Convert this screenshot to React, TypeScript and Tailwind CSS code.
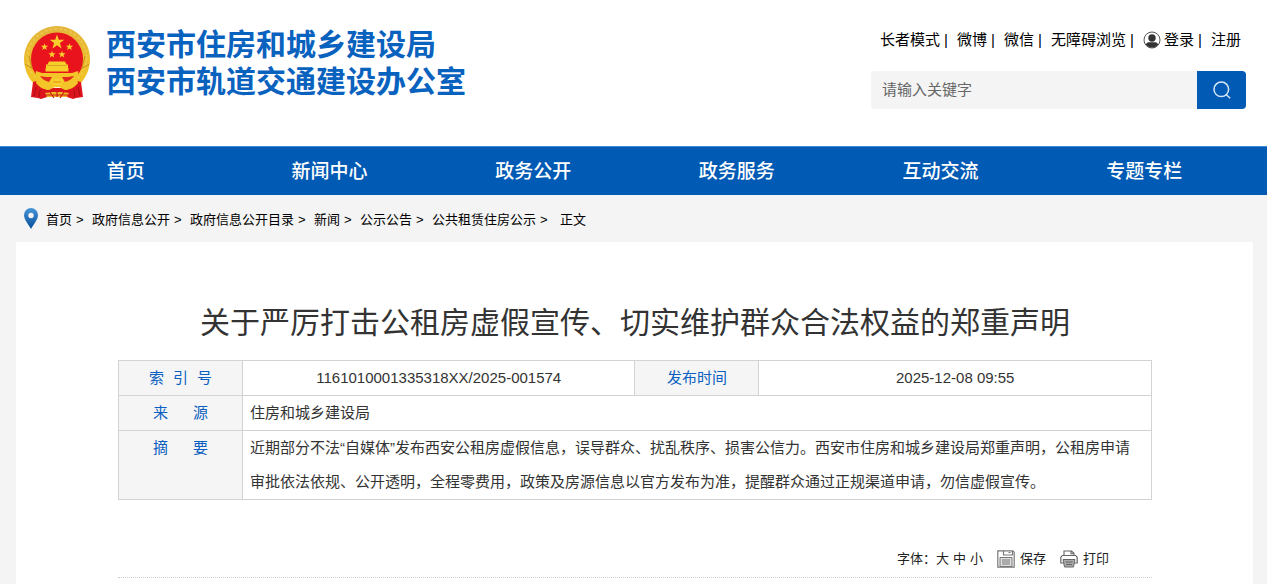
import React from "react";

const topLinks = ["长者模式", "微博", "微信", "无障碍浏览"];

const navItems = ["首页", "新闻中心", "政务公开", "政务服务", "互动交流", "专题专栏"];

const crumbs = ["首页", "政府信息公开", "政府信息公开目录", "新闻", "公示公告", "公共租赁住房公示"];

function Emblem() {
  return (
    <svg viewBox="0 0 66 73" className="h-[73px] w-[66px] shrink-0" role="img" aria-label="国徽">
      <defs>
        <linearGradient id="gold" x1="0" y1="0" x2="0" y2="1">
          <stop offset="0" stopColor="#e3b53c" />
          <stop offset="1" stopColor="#f3c321" />
        </linearGradient>
      </defs>
      {/* wheat ring */}
      <path d="M33 0C15 0 0 15 0 33c0 10 4 19 11 26h44c7-7 11-16 11-26C66 15 51 0 33 0z" fill="url(#gold)" />
      <ellipse
        cx="33"
        cy="32"
        rx="29.5"
        ry="29"
        fill="none"
        stroke="#f8dc6a"
        strokeWidth="2"
        strokeDasharray="3 2"
        opacity="0.4"
      />
      <path d="M1 38l8 5M65 38l-8 5M5 30l3 12M61 30l-3 12" fill="none" stroke="#b98418" strokeWidth="0.8" />
      <ellipse cx="33" cy="33" rx="26" ry="26.5" fill="#e8131c" />
      {/* stars */}
      <g fill="#f9cf2d">
        <path d="M33 8.5l1.800 5.200 5.500.1-4.400 3.300 1.600 5.300-4.500-3.100-4.500 3.100 1.600-5.300-4.400-3.300 5.500-.1z" />
        <path id="s" d="M20.500 17.200l.9 2.500 2.700.1-2.100 1.600.8 2.600-2.300-1.600-2.300 1.600.8-2.600-2.100-1.600 2.700-.1z" />
        <use href="#s" x="25" />
        <use href="#s" x="7.500" y="7.500" />
        <use href="#s" x="17.500" y="7.500" />
      </g>
      {/* gate tower */}
      <path d="M25 35.500h16l1.500 3H44v4H22v-4h1.500zM21.500 42h23v3.500h-23z" fill="#f7cf2b" />
      <path d="M23 39.500h20" stroke="#d59d1b" strokeWidth="0.8" />
      {/* gear and wheat stems */}
      <path
        d="M12 45l6 2h30l6-2 1 5c-4 6-9 9-15 11H26c-6-2-11-5-15-11z"
        fill="#f4c528"
      />
      <path d="M16 50c4 1 8 1 12 1l-3 5c-4-1-7-3-9-6zM50 50c-4 1-8 1-12 1l3 5c4-1 7-3 9-6z" fill="#e32a1c" />
      {/* ribbon */}
      <path d="M9 56l4-1 5 4 8 3h14l8-3 5-4 4 1 2 15-7 1-3 1-6-2H23l-6 2-3-1-7-1z" fill="#dc141c" />
      <path d="M13 53c4 4 8 6 12 6l8-3 8 3c4 0 8-2 12-6l1 4c-4 5-9 7-13 7l-8-4-8 4c-4 0-9-2-13-7z" fill="#f4c528" />
      <path d="M27 56l2-3h8l2 3-2 3h-8z" fill="#f8cf2e" />
      <path d="M29 56h8" stroke="#e08a19" strokeWidth="1" />
      <path d="M21 67l7-1h10l7 1-2 4H23z" fill="#ecb925" />
      <path d="M26 66l4 6M40 66l-4 6M33 65v6M21 69h24" stroke="#cf1b16" strokeWidth="1.200" />
      <path d="M12 61l-2 9M16 64l-1 7M54 61l2 9M50 64l1 7" stroke="#a80f16" strokeWidth="1" />
    </svg>
  );
}

function UserIcon() {
  return (
    <svg viewBox="0 0 18 18" className="h-[18px] w-[18px]" aria-hidden>
      <circle cx="9" cy="9" r="8" fill="#fff" stroke="#555" strokeWidth="1" />
      <circle cx="9" cy="7" r="3.700" fill="#333" />
      <path d="M2.800 13.500c.6-1.700 2-2.300 3.500-2.300h5.400c1.500 0 2.900.6 3.500 2.300C13.700 15.600 11.500 16.600 9 16.600s-4.700-1-6.200-3.100z" fill="#333" />
    </svg>
  );
}

function PinIcon() {
  return (
    <svg viewBox="0 0 14 21" className="h-[21px] w-[14px] shrink-0" aria-hidden>
      <defs>
        <linearGradient id="pin" x1="0" y1="0" x2="0" y2="1">
          <stop offset="0" stopColor="#4796d6" />
          <stop offset="1" stopColor="#054c9c" />
        </linearGradient>
      </defs>
      <path
        fillRule="evenodd"
        d="M7 0a7 7 0 0 0-7 7c0 5 4.500 9 7 14 2.500-5 7-9 7-14a7 7 0 0 0-7-7zm0 4.800a2.700 2.700 0 1 1 0 5.400 2.700 2.700 0 0 1 0-5.400z"
        fill="url(#pin)"
      />
    </svg>
  );
}

function SaveIcon() {
  return (
    <svg viewBox="0 0 18 18" className="h-[18px] w-[18px]" fill="none" stroke="#777" aria-hidden>
      <path d="M.8.8h15l1.400 1.400v15H.8z" strokeWidth="1.200" />
      <path d="M6.500 1v4h9V1M11.500 2.500h2" strokeWidth="1.200" />
      <path d="M3 7.500h12v9H3z" fill="#ddd" strokeWidth="1" />
      <path d="M5 10h8M5 12h8M5 14h8" strokeWidth="1" />
    </svg>
  );
}

function PrintIcon() {
  return (
    <svg viewBox="0 0 18 18" className="h-[18px] w-[18px]" fill="none" stroke="#666" aria-hidden>
      <path d="M4 5.500V1h7.500L14 3.300v2.200M11 1v2.800h3" strokeWidth="1.100" />
      <path d="M3.500 13H.8V7.500l1.500-2h13.400l1.500 2V13h-2.700" strokeWidth="1.200" />
      <path d="M3 9.500h12l-1.500 7.500h-9z" fill="#aaa" strokeWidth="1" />
      <path d="M5.500 12h7M6 14.500h6" strokeWidth="1.200" />
    </svg>
  );
}

function Header() {
  return (
    <header className="flex h-[146px] items-start justify-between bg-white pl-6 pr-[21px]">
      <a href="#" className="flex gap-4 pt-[26px]">
        <Emblem />
        <h1 className="text-[30px] font-bold leading-[37px] text-[#0a62bf]">
          西安市住房和城乡建设局
          <br />
          西安市轨道交通建设办公室
        </h1>
      </a>

      <div className="w-[375px] pt-[30px]">
        <div className="flex items-center justify-end pr-[5px] text-[15px] leading-5 text-black">
          {topLinks.map((label) => (
            <React.Fragment key={label}>
              <a href="#">{label}</a>
              <span className="w-[17px] pl-1">|</span>
            </React.Fragment>
          ))}
          <a href="#" className="flex items-center gap-[3px]">
            <UserIcon />
            登录
          </a>
          <span className="w-[17px] pl-1">|</span>
          <a href="#">注册</a>
        </div>

        <form className="mt-[21px] flex h-[38px] overflow-hidden rounded-[4px]" onSubmit={(e) => e.preventDefault()}>
          <input
            type="text"
            aria-label="搜索"
            placeholder="请输入关键字"
            className="min-w-0 flex-1 bg-[#f4f4f4] px-[11px] text-[15px] outline-none placeholder:text-[#666]"
          />
          <button type="submit" aria-label="搜索" className="flex w-[49px] items-center justify-center bg-[#015ab4]">
            <svg viewBox="0 0 18 18" className="h-[18px] w-[18px]" fill="none" stroke="#d5e6f6" strokeWidth="1.500" aria-hidden>
              <circle cx="8.300" cy="8.300" r="7.300" />
              <path d="M12.800 13.200l4.400 4" />
            </svg>
          </button>
        </form>
      </div>
    </header>
  );
}

function Nav() {
  return (
    <nav className="h-[49px] border-t border-[#3d8ad2] bg-[#015ab4] pl-6 pr-[21px]">
      <ul className="grid h-full grid-cols-6 items-center pt-0.5 text-center text-[19px] font-medium text-white">
        {navItems.map((label) => (
          <li key={label}>
            <a href="#">{label}</a>
          </li>
        ))}
      </ul>
    </nav>
  );
}

function Breadcrumb() {
  return (
    <div className="flex h-[47px] items-center pl-6 text-[13px] text-black">
      <PinIcon />
      <div className="flex items-center pl-2 pt-0.5">
        {crumbs.map((label) => (
          <React.Fragment key={label}>
            <a href="#">{label}</a>
            <span className="w-5 pl-1">&gt;</span>
          </React.Fragment>
        ))}
        <span className="pl-1">正文</span>
      </div>
    </div>
  );
}

function InfoTable() {
  const th = "border border-[#d3d3d3] bg-[#f5f5f5] p-0 text-center align-top font-normal text-[#0a5fc0]";
  const td = "border border-[#d3d3d3] p-0";
  return (
    <table className="w-full table-fixed border-collapse text-[15px] leading-[34px] text-[#333]">
      <colgroup>
        <col className="w-[12%]" />
        <col className="w-[38%]" />
        <col className="w-[12%]" />
        <col className="w-[38%]" />
      </colgroup>
      <tbody>
        <tr>
          <th scope="row" className={th}>
            <span className="flex justify-center gap-[9px]">
              <span>索</span>
              <span>引</span>
              <span>号</span>
            </span>
          </th>
          <td className={`${td} text-center`}>1161010001335318XX/2025-001574</td>
          <th scope="row" className={th}>
            发布时间
          </th>
          <td className={`${td} text-center`}>2025-12-08 09:55</td>
        </tr>
        <tr>
          <th scope="row" className={th}>
            <span className="flex justify-center gap-[25px]">
              <span>来</span>
              <span>源</span>
            </span>
          </th>
          <td colSpan={3} className={`${td} pl-[7px]`}>
            住房和城乡建设局
          </td>
        </tr>
        <tr>
          <th scope="row" className={th}>
            <span className="flex justify-center gap-[25px]">
              <span>摘</span>
              <span>要</span>
            </span>
          </th>
          <td colSpan={3} className={`${td} px-[7px]`}>
            近期部分不法“自媒体”发布西安公租房虚假信息，误导群众、扰乱秩序、损害公信力。西安市住房和城乡建设局郑重声明，公租房申请审批依法依规、公开透明，全程零费用，政策及房源信息以官方发布为准，提醒群众通过正规渠道申请，勿信虚假宣传。
          </td>
        </tr>
      </tbody>
    </table>
  );
}

function Toolbar() {
  return (
    <div className="mt-[47px] flex h-[31px] items-start justify-end border-b border-dotted border-[#ccc] pr-[43px] text-[13px] leading-6 text-[#222]">
      <span>字体：</span>
      <div className="flex gap-1">
        <button type="button">大</button>
        <button type="button">中</button>
        <button type="button">小</button>
      </div>
      <button type="button" className="ml-[14px] flex items-center gap-[5px]">
        <SaveIcon />
        保存
      </button>
      <button type="button" className="ml-[14px] flex items-center gap-[5px]">
        <PrintIcon />
        打印
      </button>
    </div>
  );
}

export default function App() {
  return (
    <div
      lang="zh-CN"
      className="flex min-h-screen flex-col bg-[#f4f4f4] font-['Liberation_Sans','Noto_Sans_CJK_SC',sans-serif]"
    >
      <Header />
      <Nav />
      <Breadcrumb />
      <main className="ml-4 mr-[14px] flex-1 bg-white pl-[102px] pr-[101px] pt-[58px]">
        <h2 className="text-center text-[30px] leading-[46px] text-[#333]">
          关于严厉打击公租房虚假宣传、切实维护群众合法权益的郑重声明
        </h2>
        <div className="mt-[14px]">
          <InfoTable />
        </div>
        <Toolbar />
      </main>
    </div>
  );
}
